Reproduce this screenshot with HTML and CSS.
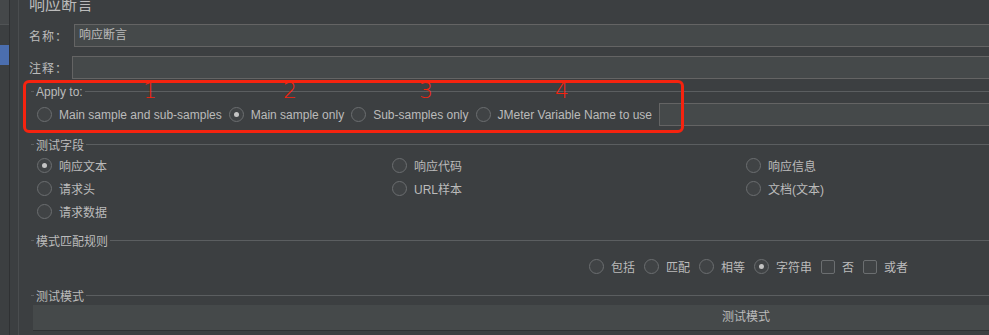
FILE: index.html
```html
<html>

<head>
    <title>响应断言</title>
    <link rel="stylesheet" href="styles.css">
</head>

<body>
<div class="app">
    <div class="sidebar">
        <div class="side-top"></div>
        <div class="side-item"></div>
        <div class="side-item selected"></div>
    </div>
    <div class="gutter"></div>

    <div class="main">
        <div class="title">响应断言</div>

        <div class="field-row">
            <span class="label">名称：</span>
            <div class="input name-input">响应断言</div>
        </div>
        <div class="field-row comment-row">
            <span class="label">注释：</span>
            <div class="input"></div>
        </div>

        <!-- Apply to -->
        <div class="sep apply-sep"><span>Apply to:</span></div>
        <div class="apply-row">
            <label class="opt"><span class="radio"></span>Main sample and sub-samples</label>
            <label class="opt"><span class="radio checked"></span>Main sample only</label>
            <label class="opt"><span class="radio"></span>Sub-samples only</label>
            <label class="opt"><span class="radio"></span>JMeter Variable Name to use</label>
            <div class="input var-input"></div>
        </div>

        <!-- 测试字段 -->
        <div class="sep fields-sep"><span>测试字段</span></div>
        <div class="field-grid">
            <label class="opt"><span class="radio checked"></span>响应文本</label>
            <label class="opt"><span class="radio"></span>响应代码</label>
            <label class="opt"><span class="radio"></span>响应信息</label>
            <label class="opt"><span class="radio"></span>请求头</label>
            <label class="opt"><span class="radio"></span>URL样本</label>
            <label class="opt"><span class="radio"></span>文档(文本)</label>
            <label class="opt"><span class="radio"></span>请求数据</label>
        </div>

        <!-- 模式匹配规则 -->
        <div class="sep rule-sep"><span>模式匹配规则</span></div>
        <div class="rule-row">
            <label class="opt"><span class="radio"></span>包括</label>
            <label class="opt"><span class="radio"></span>匹配</label>
            <label class="opt"><span class="radio"></span>相等</label>
            <label class="opt"><span class="radio checked"></span>字符串</label>
            <label class="opt"><span class="check"></span>否</label>
            <label class="opt"><span class="check"></span>或者</label>
        </div>

        <!-- 测试模式 -->
        <div class="sep mode-sep"><span>测试模式</span></div>
        <div class="table-head">测试模式</div>
    </div>
</div>

<!-- annotation -->
<div class="mark-box"></div>
<div class="mark n1">1</div>
<div class="mark n2">2</div>
<div class="mark n3">3</div>
<div class="mark n4">4</div>
</body>

</html>
```

FILE: styles.css
```css
body {
  margin: 0;
  width: 989px;
  height: 335px;
  overflow: hidden;
  background-color: #3c3f41;
  color: #bbbbbb;
  font-family: "Liberation Sans", "Noto Sans CJK SC", sans-serif;
  font-size: 12px;
  position: relative;
}

.app {
  display: flex;
  height: 335px;
}

/* left tree strip */
.sidebar {
  width: 9px;
  border-right: 1px solid #2f3133;
}

.side-top {
  height: 24px;
  background-color: #45484a;
  border-bottom: 1px solid #505355;
}

.side-item {
  height: 20px;
}

.side-item.selected {
  background-color: #4b6eaf;
}

.gutter {
  width: 8px;
  border-right: 1px solid #4a4d4f;
}

.main {
  flex: 1;
  padding-left: 10px;
  min-width: 0;
}

.title {
  font-size: 16px;
  height: 18px;
  line-height: 18px;
  margin-top: -4px;
}

.field-row {
  display: flex;
  align-items: center;
  margin-top: 10px;
  height: 23px;
}

.comment-row {
  margin-top: 9px;
}

.label {
  width: 45px;
  letter-spacing: 1px;
}

.comment-row .label {
  width: 43px;
}

.input {
  flex: 1;
  height: 21px;
  line-height: 21px;
  background-color: #45494a;
  border: 1px solid #646464;
  border-right: none;
  padding-left: 4px;
}

/* titled separator */
.sep {
  display: flex;
  align-items: center;
  height: 15px;
  margin-left: 2px;
}

.sep:before {
  content: "";
  width: 3px;
  height: 1px;
  background-color: #5b5e60;
}

.sep:after {
  content: "";
  flex: 1;
  height: 1px;
  background-color: #5b5e60;
}

.sep span {
  padding: 0 2px;
}

.apply-sep {
  margin-top: 5px;
}

.fields-sep {
  margin-top: 11px;
}

.rule-sep {
  margin-top: 10px;
}

.mode-sep {
  margin-top: 10px;
}

/* options */
.opt {
  display: flex;
  align-items: center;
  white-space: nowrap;
}

.radio {
  width: 13px;
  height: 13px;
  border: 1px solid #6b6e70;
  border-radius: 50%;
  background-color: #404345;
  margin-right: 7px;
  position: relative;
  flex-shrink: 0;
}

.radio.checked:after {
  content: "";
  position: absolute;
  left: 4px;
  top: 4px;
  width: 5px;
  height: 5px;
  border-radius: 50%;
  background-color: #c4c4c4;
}

.check {
  width: 12px;
  height: 12px;
  border: 1px solid #6b6e70;
  border-radius: 2px;
  background-color: #404345;
  margin-right: 7px;
}

.apply-row {
  display: flex;
  align-items: center;
  height: 23px;
  margin-top: 4px;
  padding-left: 8px;
}

.apply-row .opt {
  margin-right: 7px;
}

.field-grid {
  display: grid;
  grid-template-columns: 355px 354px auto;
  grid-auto-rows: 23px;
  align-items: center;
  margin-top: 2px;
  padding-left: 8px;
}

.rule-row {
  display: flex;
  align-items: center;
  height: 23px;
  margin-top: 7px;
  padding-left: 560px;
}

.rule-row .opt {
  margin-right: 9px;
}

.table-head {
  width: 1426px;
  margin-top: 2px;
  margin-left: 4px;
  height: 25px;
  line-height: 25px;
  text-align: center;
  background-color: #45494a;
  border-bottom: 1px solid #2f3133;
}

/* red annotation drawn over the screenshot */
.mark-box {
  position: absolute;
  left: 23px;
  top: 80px;
  width: 655px;
  height: 47px;
  border: 3px solid #f6230f;
  border-radius: 6px;
}

.mark {
  position: absolute;
  top: 78px;
  color: #f6230f;
  font-family: "DejaVu Sans", sans-serif;
  font-size: 22px;
  font-weight: 200;
}

.n1 { left: 143px; }
.n2 { left: 283px; }
.n3 { left: 419px; }
.n4 { left: 555px; }
```
